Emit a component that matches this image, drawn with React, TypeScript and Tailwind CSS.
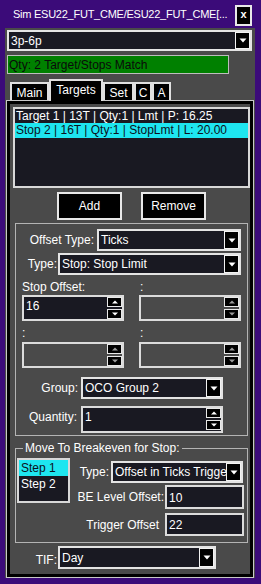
import React from "react";

const font = "font-['Liberation_Sans',Arial,sans-serif]";

function DownArrow({ color = "#ffffff" }: { color?: string }) {
  return (
    <svg width="8" height="5" viewBox="0 0 8 5">
      <polygon points="0.5,0.5 7.5,0.5 4,4.5" fill={color} />
    </svg>
  );
}

function Combo({ value, className }: { value: string; className: string }) {
  return (
    <div className={`flex border-2 border-[#e4e4e4] bg-[#191922] ${className}`}>
      <div className="flex flex-1 items-center overflow-hidden whitespace-nowrap pl-[2px] text-white">
        {value}
      </div>
      <div className="flex w-[15px] shrink-0 items-center justify-center border border-[#f2f2f2] bg-black">
        <DownArrow />
      </div>
    </div>
  );
}

function SpinBtn({ up, disabled }: { up?: boolean; disabled?: boolean }) {
  const c = disabled ? "#9c9c9c" : "#ffffff";
  return (
    <div className="flex h-[10px] w-[15px] items-center justify-center border border-[#e8e8e8] bg-black">
      <svg width="6" height="4" viewBox="0 0 6 4">
        {up ? (
          <polygon points="0,3.5 6,3.5 3,0.5" fill={c} />
        ) : (
          <polygon points="0,0.5 6,0.5 3,3.5" fill={c} />
        )}
      </svg>
    </div>
  );
}

function NumBox({
  value,
  disabled,
  className,
}: {
  value?: string;
  disabled?: boolean;
  className: string;
}) {
  return (
    <div
      className={`flex border-2 border-[#dcdcdc] ${
        disabled ? "bg-[#4a4a4a]" : "bg-[#191922]"
      } ${className}`}
    >
      <div className="flex-1 pl-[2px] pt-[2px] leading-[14px]">{value}</div>
      <div className="flex flex-col gap-[2px]">
        <SpinBtn up disabled={disabled} />
        <SpinBtn disabled={disabled} />
      </div>
    </div>
  );
}

function TextBox({ value, className }: { value: string; className: string }) {
  return (
    <div className={`flex items-center border-2 border-[#dcdcdc] bg-[#191922] pl-[2px] pt-[1px] ${className}`}>
      {value}
    </div>
  );
}

const tabs = [
  { name: "Main", w: "w-[39px]" },
  { name: "Targets", w: "w-[54px]" },
  { name: "Set", w: "w-[31px]" },
  { name: "C", w: "w-[18px]" },
  { name: "A", w: "w-[19px]" },
];

export default function App() {
  return (
    <div className={`h-[584px] w-[261px] overflow-hidden bg-[#3b0b79] text-[12px] leading-[14px] text-white ${font}`}>
      {/* title bar */}
      <div className="flex h-[28px] items-center">
        <div className="ml-[13px] flex-1 whitespace-nowrap text-[11px] tracking-[-0.25px]">
          Sim ESU22_FUT_CME/ESU22_FUT_CME[...
        </div>
        <div className="mr-[9px] mt-[2px] flex h-[21px] w-[17px] items-center justify-center border-2 border-[#e8e8e8] bg-black pb-[2px] text-[11px] font-bold">
          x
        </div>
      </div>

      <div className="ml-[5px] w-[250px] bg-[#4a4a4a] pt-[2px]">
        <Combo value="3p-6p" className="ml-[2px] h-[21px] w-[245px]" />
        <div className="ml-[2px] mt-[4px] flex h-[19px] w-[222px] items-center border border-[#bdbdbd] bg-[#008000] pl-[1px] text-[#0a0a0a]">
          Qty: 2 Target/Stops Match
        </div>

        {/* tabs */}
        <div className="ml-[5px] mt-[5px] flex h-[21px] items-end">
          {tabs.map((t) =>
            t.name === "Targets" ? (
              <div
                key={t.name}
                className={`relative z-10 -mb-[1px] flex h-[22px] ${t.w} items-start justify-center border-2 border-b-0 border-[#e0e0e0] bg-black pt-[2px]`}
              >
                {t.name}
              </div>
            ) : (
              <div
                key={t.name}
                className={`flex h-[18px] ${t.w} items-center justify-center border-2 border-b-0 border-[#e0e0e0] bg-black pt-[2px]`}
              >
                {t.name}
              </div>
            )
          )}
        </div>

        {/* tab page */}
        <div className="ml-[1px] h-[478px] w-[248px] border border-[#c8c8c8]">
          <div className="flex h-full flex-col border-[3px] border-black bg-[#4a4a4a]">
            {/* orders list */}
            <div className="ml-[3px] mt-[3px] h-[81px] w-[237px] border-2 border-[#d8d8d8] bg-[#191922]">
              <div className="h-[14px] whitespace-nowrap pl-[1px] leading-[14px]">
                Target 1 | 13T | Qty:1 | Lmt | P: 16.25
              </div>
              <div className="h-[15px] whitespace-nowrap bg-[#1ee6f0] pl-[1px] leading-[15px] text-[#0c1020]">
                Stop 2 | 16T | Qty:1 | StopLmt | L: 20.00
              </div>
            </div>

            <div className="mt-[4px] flex h-[28px]">
              <button className="ml-[47px] h-full w-[65px] border-2 border-[#e8e8e8] bg-black">Add</button>
              <button className="ml-[19px] h-full w-[65px] border-2 border-[#e8e8e8] bg-black">Remove</button>
            </div>

            {/* offset group */}
            <div className="ml-[5px] mt-[3px] flex h-[213px] w-[233px] flex-col border border-[#b4b4b4]">
              <div className="mt-[5px] flex h-[22px] items-center">
                <div className="w-[78px] text-right">Offset Type:</div>
                <Combo value="Ticks" className="ml-[3px] h-[22px] w-[144px]" />
              </div>
              <div className="mt-[2px] flex h-[22px] items-center">
                <div className="w-[41px] text-right">Type:</div>
                <Combo value="Stop: Stop Limit" className="ml-[1px] h-[22px] w-[183px]" />
              </div>
              <div className="ml-[6px] mt-[4px] flex h-[16px] items-center">
                <div className="w-[118px]">Stop Offset:</div>
                <div>:</div>
              </div>
              <div className="ml-[6px] flex h-[26px] gap-[15px]">
                <NumBox value="16" className="h-full w-[102px]" />
                <NumBox disabled className="h-full w-[102px]" />
              </div>
              <div className="ml-[6px] mt-[4px] flex h-[16px] items-center">
                <div className="w-[118px]">:</div>
                <div>:</div>
              </div>
              <div className="ml-[6px] mt-[1px] flex h-[26px] gap-[15px]">
                <NumBox disabled className="h-full w-[102px]" />
                <NumBox disabled className="h-full w-[102px]" />
              </div>
              <div className="mt-[9px] flex h-[22px] items-center">
                <div className="w-[62px] text-right">Group:</div>
                <Combo value="OCO Group 2" className="ml-[3px] h-[22px] w-[142px]" />
              </div>
              <div className="mt-[7px] flex h-[27px] items-start">
                <div className="w-[61px] pt-[4px] text-right">Quantity:</div>
                <NumBox value="1" className="ml-[4px] h-full w-[142px]" />
              </div>
            </div>

            {/* breakeven group */}
            <fieldset className="ml-[5px] mt-[5px] h-[102px] w-[233px] border border-[#b4b4b4]">
              <legend className="ml-[7px] px-[2px] leading-[14px]">Move To Breakeven for Stop:</legend>
              <div className="mt-[3px] flex">
                <div className="ml-[1px] h-[45px] w-[53px] shrink-0 border-2 border-[#d8d8d8] bg-[#191922]">
                  <div className="h-[16px] bg-[#1ee6f0] pl-[2px] leading-[16px] text-[#0c1020]">Step 1</div>
                  <div className="h-[16px] pl-[2px] leading-[16px]">Step 2</div>
                </div>
                <div className="flex flex-col">
                  <div className="mt-[3px] flex h-[22px] items-center">
                    <div className="w-[39px] text-right">Type:</div>
                    <Combo value="Offset in Ticks Trigger" className="ml-[2px] h-[22px] w-[132px]" />
                  </div>
                  <div className="mt-[2px] flex h-[24px] items-center">
                    <div className="w-[94px] whitespace-nowrap text-right">BE Level Offset:</div>
                    <TextBox value="10" className="ml-[1px] h-full w-[79px]" />
                  </div>
                  <div className="mt-[4px] flex h-[23px] items-center">
                    <div className="w-[89px] whitespace-nowrap text-right">Trigger Offset</div>
                    <TextBox value="22" className="ml-[6px] h-full w-[79px]" />
                  </div>
                </div>
              </div>
            </fieldset>

            <div className="mt-[3px] flex h-[23px] items-center">
              <div className="w-[47px] pt-[4px] text-right">TIF:</div>
              <Combo value="Day" className="ml-[1px] h-[23px] w-[158px]" />
            </div>
          </div>
        </div>
      </div>
    </div>
  );
}
